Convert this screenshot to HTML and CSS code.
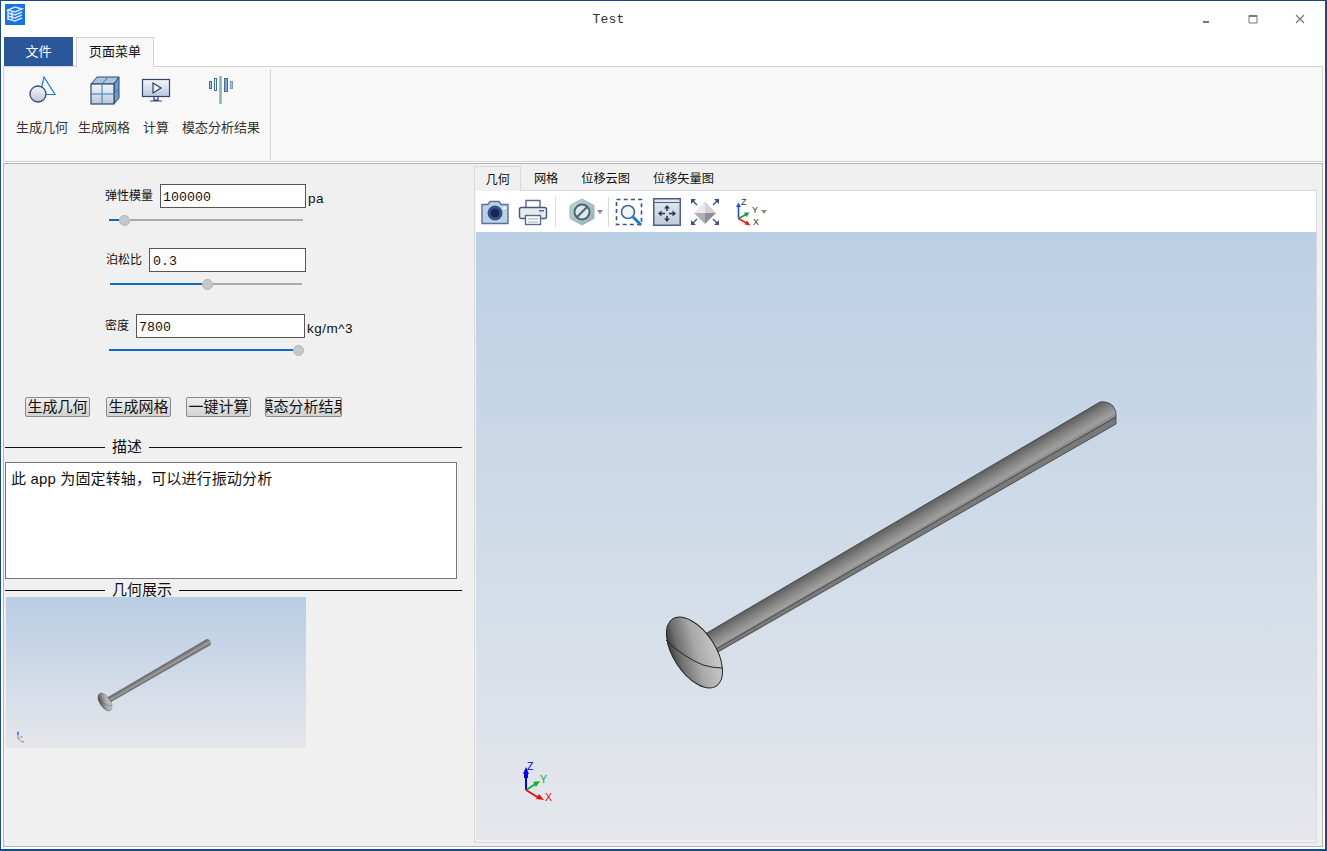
FILE: index.html
```html
<!DOCTYPE html>
<html>
	<head>
		<meta charset="UTF-8">
		<title>Test</title>
		<link rel="stylesheet" href="styles.css">
	</head>
	<body>
		<svg class="defs" width="0" height="0">
			<defs>
				<linearGradient id="shaftFill" gradientUnits="userSpaceOnUse" x1="900" y1="519.5" x2="909.8" y2="536.2">
					<stop offset="0" stop-color="#5e5e5e"/>
					<stop offset="0.4" stop-color="#808080"/>
					<stop offset="0.85" stop-color="#a0a0a0"/>
					<stop offset="1" stop-color="#8a8a8a"/>
				</linearGradient>
				<linearGradient id="headFill" x1="0.8" y1="0.1" x2="0.25" y2="0.95">
					<stop offset="0" stop-color="#c9c9c9"/>
					<stop offset="0.45" stop-color="#a8a8a8"/>
					<stop offset="0.8" stop-color="#707070"/>
					<stop offset="1" stop-color="#3c3c3c"/>
				</linearGradient>
				<linearGradient id="paleBlue" x1="0" y1="0" x2="0" y2="1">
					<stop offset="0" stop-color="#f4f6fa"/>
					<stop offset="1" stop-color="#b9c6dc"/>
				</linearGradient>
				<linearGradient id="fitFill" x1="0" y1="0" x2="0" y2="1">
					<stop offset="0" stop-color="#e4e8ee"/>
					<stop offset="1" stop-color="#c3cad6"/>
				</linearGradient>
				<linearGradient id="hexFill" x1="0" y1="0" x2="1" y2="1">
					<stop offset="0" stop-color="#c3d6d8"/>
					<stop offset="1" stop-color="#92b0b5"/>
				</linearGradient>
				<g id="model">
					<polygon points="718,652 1116,424 1116,417 707,645" fill="#7a7a7a" stroke="#3c3c3c" stroke-width="0.8"/>
					<path d="M705,634 L1100,402 Q1108,401 1113,406 Q1117,411 1116,417 L716,649 Z" fill="url(#shaftFill)" stroke="#3a3a3a" stroke-width="0.8"/>
					<ellipse cx="694.5" cy="652.5" rx="40" ry="21" transform="rotate(57 694.5 652.5)" fill="url(#headFill)" stroke="#222" stroke-width="1"/>
					<path d="M666,640 Q683,657 703,665 Q713,668 722,668" fill="none" stroke="#222" stroke-width="1"/>
				</g>
				<g id="triad">
					<line x1="526" y1="790" x2="526" y2="771" stroke="#0000e0" stroke-width="2"/>
					<polygon points="526,767 523,774 529,774" fill="#0000e0"/>
					<rect x="524" y="774" width="4" height="4" fill="#0000e0"/>
					<line x1="526" y1="790" x2="537" y2="783" stroke="#10b030" stroke-width="2"/>
					<polygon points="540,781 533,782 536,787" fill="#10b030"/>
					<line x1="526" y1="790" x2="539" y2="798" stroke="#e01010" stroke-width="2"/>
					<polygon points="544,800 536,799 539,794" fill="#e01010"/>
				</g>
			</defs>
		</svg>

		<div class="window">
			<header class="titlebar">
				<svg class="appicon" width="20" height="21" viewBox="0 0 20 21">
					<rect width="20" height="21" fill="#1673e6"/>
					<path d="M3 6 L10 3 L17 5 L10 8 Z M3 9 L10 11 L17 8 M3 12 L10 14 L17 11 M3 15 L10 17 L17 14" fill="none" stroke="#cfe3fb" stroke-width="1.6"/>
					<path d="M3 6 V16 M7 8 V15" stroke="#e6f0fd" stroke-width="1.4"/>
				</svg>
				<span class="title">Test</span>
				<div class="wincontrols">
					<svg width="12" height="12" viewBox="0 0 12 12"><rect x="3" y="8" width="6" height="2" fill="#777"/></svg>
					<svg width="12" height="12" viewBox="0 0 12 12"><path d="M2 2.5H10V10H2Z M2 3.5H10" fill="none" stroke="#777"/></svg>
					<svg width="12" height="12" viewBox="0 0 12 12"><path d="M2 2L10 10M10 2L2 10" fill="none" stroke="#777" stroke-width="1.2"/></svg>
				</div>
			</header>

			<nav class="menutabs">
				<a class="filetab">文件</a>
				<a class="pagetab">页面菜单</a>
			</nav>

			<section class="ribbon">
				<div class="rgroup">
					<div class="rbtn">
						<svg width="32" height="32" viewBox="0 0 32 32">
							<path d="M18 3 L29 20.5 H14 Z" fill="#f4f8fc" stroke="#1b7fc4" stroke-width="1.2"/>
							<circle cx="12" cy="20" r="8" fill="url(#paleBlue)" stroke="#34466e" stroke-width="1.3"/>
						</svg>
						<span>生成几何</span>
					</div>
					<div class="rbtn">
						<svg width="32" height="32" viewBox="0 0 32 32">
							<path d="M3 10 L9 3 H31 L26 10 Z" fill="#a9c6de" stroke="#34466e"/>
							<path d="M26 10 L31 3 V24 L26 30 Z" fill="#6e9cc0" stroke="#34466e"/>
							<rect x="3" y="10" width="23" height="20" fill="url(#paleBlue)" stroke="#34466e" stroke-width="1.2"/>
							<path d="M14 10 V30 M3 20 H26 M14 10 L20 3 M26 20 L31 14" stroke="#2d7fb8" fill="none"/>
						</svg>
						<span>生成网格</span>
					</div>
					<div class="rbtn">
						<svg width="30" height="32" viewBox="0 0 30 32">
							<rect x="1.5" y="5.5" width="27" height="17" fill="url(#paleBlue)" stroke="#34466e" stroke-width="1.2"/>
							<path d="M12 9 L20 14 L12 19 Z" fill="#eef2f8" stroke="#2b3e6a" stroke-width="1.2"/>
							<path d="M13 23 V26 H17 V23 M9 27 H21" fill="none" stroke="#34466e" stroke-width="1.2"/>
						</svg>
						<span>计算</span>
					</div>
					<div class="rbtn">
						<svg width="28" height="32" viewBox="0 0 28 32">
							<rect x="2.5" y="7.5" width="2" height="7" fill="#a8c4de" stroke="#3f6d9c"/>
							<rect x="7.5" y="4.5" width="2" height="12" fill="#f0f4f8" stroke="#3f6d9c"/>
							<rect x="12.5" y="2.5" width="2" height="27" fill="#8fb0b8" stroke="#a5bcc2"/>
							<rect x="17.5" y="4.5" width="3" height="13" fill="#8fa8c0" stroke="#3f6d9c"/>
							<rect x="23.5" y="7.5" width="2" height="7" fill="#a8c4de" stroke="#7a9cc0"/>
						</svg>
						<span>模态分析结果</span>
					</div>
				</div>
			</section>

			<main class="main">
				<section class="left">
					<div class="field field-e">
						<label>弹性模量</label>
						<input class="numbox box-e" type="text" value="100000">
						<span class="unit">pa</span>
					</div>
					<div class="slider slider-e">
						<i class="fill" style="width:10px"></i><b class="thumb"></b><i class="rest"></i>
					</div>

					<div class="field field-nu">
						<label>泊松比</label>
						<input class="numbox box-nu" type="text" value="0.3">
					</div>
					<div class="slider slider-nu">
						<i class="fill" style="width:92px"></i><b class="thumb"></b><i class="rest"></i>
					</div>

					<div class="field field-rho">
						<label>密度</label>
						<input class="numbox box-rho" type="text" value="7800">
						<span class="unit">kg/m^3</span>
					</div>
					<div class="slider slider-rho">
						<i class="fill" style="width:184px"></i><b class="thumb"></b>
					</div>

					<div class="actions">
						<button class="btn">生成几何</button>
						<button class="btn">生成网格</button>
						<button class="btn">一键计算</button>
						<button class="btn btn-wide">模态分析结果</button>
					</div>

					<div class="divider divider-desc"><span>描述</span></div>
					<div class="desc">此 app 为固定转轴，可以进行振动分析</div>
					<div class="divider divider-geo"><span>几何展示</span></div>

					<div class="thumbview">
						<svg width="300" height="151" viewBox="0 0 300 151">
							<use href="#model" transform="translate(99 105) scale(.25) translate(-694.5 -652.5)"/>
							<use href="#triad" transform="translate(12 142) scale(.35) translate(-526 -790)" opacity=".6"/>
						</svg>
					</div>
				</section>

				<section class="right">
					<nav class="viewtabs">
						<a class="vtab active">几何</a>
						<a class="vtab">网格</a>
						<a class="vtab">位移云图</a>
						<a class="vtab">位移矢量图</a>
					</nav>
					<div class="pane">
						<div class="toolbar">
							<!-- camera -->
							<svg class="ti ti-first" width="30" height="28" viewBox="0 0 30 28">
								<path d="M2 6.5 H8 L10 3.5 H19 L21 6.5 H28 V25.5 H2 Z" fill="#bcd0e8" stroke="#5a7299" stroke-width="1.4"/>
								<circle cx="15" cy="15" r="7.5" fill="#3a5288"/>
								<circle cx="15" cy="15" r="4.5" fill="#14285a"/>
								<rect x="23" y="9" width="3" height="2" fill="#fff"/>
							</svg>
							<!-- printer -->
							<svg class="ti ti-print" width="30" height="28" viewBox="0 0 30 28">
								<path d="M8 10 V2.5 H22 V10" fill="#fff" stroke="#5a6a85" stroke-width="1.4"/>
								<rect x="1.5" y="9.5" width="27" height="11" rx="2" fill="#e6ebf2" stroke="#46587a" stroke-width="1.4"/>
								<rect x="7.5" y="17.5" width="15" height="9" fill="#fff" stroke="#5a6a85" stroke-width="1.4"/>
								<path d="M10 21 H20 M10 24 H20" stroke="#9aa6b8"/>
								<rect x="21" y="12" width="5" height="1.5" fill="#5a6a85"/>
							</svg>
							<i class="tsep tsep-a"></i>
							<!-- section -->
							<svg class="ti ti-hex" width="26" height="28" viewBox="0 0 26 28">
								<polygon points="13,1 25,7.5 25,20.5 13,27 1,20.5 1,7.5" fill="url(#hexFill)" stroke="#9db8bc"/>
								<circle cx="13" cy="14" r="7.5" fill="#dfe8ea" stroke="#4a6672" stroke-width="2"/>
								<path d="M8 19 L18 9" stroke="#4a6672" stroke-width="2"/>
							</svg>
							<svg class="ti ti-arrow" width="6" height="4" viewBox="0 0 6 4"><polygon points="0,0 6,0 3,4" fill="#8a8a8a"/></svg>
							<i class="tsep tsep-b"></i>
							<!-- zoom box -->
							<svg class="ti ti-zoom" width="28" height="28" viewBox="0 0 28 28">
								<rect x="1.5" y="1.5" width="25" height="25" fill="none" stroke="#3a5288" stroke-width="1.6" stroke-dasharray="4 3.2"/>
								<circle cx="13" cy="14" r="6.5" fill="#eef4fb" stroke="#46688f" stroke-width="1.6"/>
								<path d="M18 19 L26 27" stroke="#1a7fc8" stroke-width="3"/>
							</svg>
							<!-- fit -->
							<svg class="ti ti-fit" width="28" height="28" viewBox="0 0 28 28">
								<rect x="0.75" y="0.75" width="26.5" height="26.5" fill="url(#fitFill)" stroke="#4a5f82" stroke-width="1.5"/>
								<rect x="1.5" y="4" width="25" height="1" fill="#4a5f82"/>
								<path d="M14 9 V13 M14 18 V22 M8 15.5 H12 M16 15.5 H20" stroke="#25385f" stroke-width="1.6"/>
								<path d="M14 7 L11 10.5 H17 Z M14 24 L11 20.5 H17 Z M5 15.5 L8.5 12.5 V18.5 Z M23 15.5 L19.5 12.5 V18.5 Z" fill="#25385f"/>
							</svg>
							<!-- iso -->
							<svg class="ti ti-iso" width="30" height="28" viewBox="0 0 30 28">
								<polygon points="15,3.5 4,15 15,15" fill="#eaeaec"/>
								<polygon points="15,3.5 26,15 15,15" fill="#d2d2d6"/>
								<polygon points="4,15 15,26 15,15" fill="#b0b0b4"/>
								<polygon points="26,15 15,26 15,15" fill="#909094"/>
								<path d="M1 1 H6 L1 6 Z M29 1 H24 L29 6 Z M1 27 H6 L1 22 Z M29 27 H24 L29 22 Z" fill="#37537e"/>
								<path d="M2 2 L7 7 M28 2 L23 7 M2 26 L7 21 M28 26 L23 21" stroke="#37537e" stroke-width="1.4"/>
							</svg>
							<!-- axes -->
							<svg class="ti ti-axes" width="25" height="28" viewBox="0 0 25 28" font-family="Liberation Sans, sans-serif" font-size="9">
								<path d="M2.5 20.5 V7" stroke="#1f55c0" stroke-width="1.6"/>
								<polygon points="2.5,4.5 0,9 5,9" fill="#1f55c0"/>
								<path d="M2.5 20.5 L11 16" stroke="#1e9a40" stroke-width="1.6"/>
								<polygon points="13.5,14.5 8,14.5 10.5,19" fill="#1e9a40"/>
								<path d="M2.5 20.5 L12 26" stroke="#e02020" stroke-width="1.6"/>
								<polygon points="14.5,27.5 8.5,26.5 11,22.5" fill="#e02020"/>
								<text x="5" y="7" fill="#333">Z</text>
								<text x="16" y="15" fill="#333">Y</text>
								<text x="17" y="27" fill="#333">X</text>
							</svg>
							<svg class="ti ti-arrow ti-arrow-last" width="6" height="4" viewBox="0 0 6 4"><polygon points="0,0 6,0 3,4" fill="#8a8a8a"/></svg>
						</div>
						<div class="viewer">
							<svg width="840" height="608" viewBox="476 232 840 608" font-family="Liberation Sans, sans-serif" font-size="10.5">
								<use href="#model"/>
								<use href="#triad"/>
								<text x="527" y="770" fill="#0000e0">Z</text>
								<text x="540" y="783" fill="#10b030">Y</text>
								<text x="545" y="801" fill="#e01010">X</text>
							</svg>
						</div>
					</div>
				</section>
			</main>
		</div>
	</body>
</html>
```

FILE: styles.css
```css
*{
	margin:0;padding:0;
	box-sizing:border-box;
}
body{
	width:1327px;
	height:851px;
	overflow:hidden;
	font-family:"Liberation Sans","Noto Sans CJK SC",sans-serif;
	color:#111;
}
.defs{
	display:block;
	height:0;
}
.window{
	width:1327px;
	height:851px;
	background:#fff;
	border:solid #1c4a80;
	border-width:1px 2px 2px 1px;
	display:flex;
	flex-direction:column;
}

/*标题栏*/
.titlebar{
	height:36px;
	flex:none;
	display:flex;
	align-items:flex-start;
}
.appicon{
	margin:3px 0 0 4px;
}
.title{
	flex:1;
	text-align:center;
	font:13px/37px "Liberation Mono",monospace;
	color:#333;
	padding-right:8px;
	letter-spacing:.2px;
}
.wincontrols{
	display:flex;
	gap:35px;
	margin:12px 19px 0 0;
}

/*菜单*/
.menutabs{
	height:29px;
	flex:none;
	display:flex;
	align-items:flex-end;
	padding-left:3px;
	gap:3px;
	font-size:13px;
}
.filetab{
	width:69px;
	height:29px;
	background:#2b579a;
	color:#fff;
	text-align:center;
	line-height:29px;
}
.pagetab{
	width:78px;
	height:30px;
	margin-bottom:-1px;
	background:#f8f8f8;
	border:1px solid #d2d2d2;
	border-bottom:none;
	text-align:center;
	line-height:28px;
	position:relative;
}
.ribbon{
	height:96px;
	flex:none;
	margin:0 2px 0 2px;
	background:#f8f8f8;
	border:1px solid #d2d2d2;
	padding:2px 0 1px;
}
.rgroup{
	width:267px;
	height:100%;
	border-right:1px solid #d5d5d5;
	display:flex;
	padding-left:12px;
	gap:10px;
}
.rbtn{
	display:flex;
	flex-direction:column;
	align-items:center;
	font-size:13px;
	color:#333;
	padding-top:5px;
}
.rbtn svg{
	height:32px;
}
.rbtn span{
	margin-top:12px;
	white-space:nowrap;
	line-height:20px;
}
.rbtn:nth-child(3){
	margin:0 1px;
}

/*主体*/
.main{
	flex:1;
	display:flex;
	margin:1px 2px 2px 2px;
	background:#f0f0f0;
	border:1px solid #b4b4b4;
	min-height:0;
}
.left{
	width:470px;
	flex:none;
	font-size:12px;
}
.field{
	display:flex;
	align-items:center;
}
.field label{
	white-space:nowrap;
	line-height:18px;
}
.numbox{
	height:24px;
	border:1px solid #555;
	background:#fff;
	font:13.3px "Liberation Mono",monospace;
	color:#111;
	padding:2px 0 0 2px;
	outline:none;
}
.unit{
	align-self:flex-end;
	margin-left:2px;
	font-size:13.5px;
	letter-spacing:.5px;
	line-height:18px;
}
.field-e{margin:20px 0 0 101px;}
.box-e{width:146px;margin-left:7px;}
.field-nu{margin:22px 0 0 102px;}
.box-nu{width:157px;margin-left:7px;padding-left:3px;}
.field-rho{margin:24px 0 0 101px;}
.box-rho{width:169px;margin-left:7px;}

.slider{
	height:12px;
	margin-top:6px;
	display:flex;
	align-items:center;
}
.slider .fill{
	height:2px;
	background:#0f6cbd;
}
.slider .rest{
	flex:1;
	height:2px;
	background:#aaa;
}
.thumb{
	width:11px;
	height:11px;
	flex:none;
	border-radius:50%;
	background:#c8c8c8;
	border:1px solid #b4b4b4;
}
.slider-e{margin-left:105px;width:194px;}
.slider-nu{margin-left:106px;width:192px;}
.slider-rho{margin-left:105px;width:195px;}

.actions{
	display:flex;
	margin:41px 0 0 21px;
	gap:16px;
}
.btn{
	width:65px;
	height:20px;
	flex:none;
	border:1px solid #8a8a8a;
	border-radius:2px;
	background:linear-gradient(#efefef,#d2d2d2);
	font:15px/18px "Liberation Sans","Noto Sans CJK SC",sans-serif;
	color:#111;
	display:flex;
	justify-content:center;
	overflow:hidden;
	white-space:nowrap;
}
.btn:nth-child(2){margin-right:-1px;}
.btn:nth-child(3){margin-right:-2px;}
.btn-wide{width:77px;}

.divider{
	width:457px;
	height:14px;
	margin-left:1px;
	display:flex;
	align-items:center;
	font-size:15px;
	line-height:14px;
}
.divider:before,
.divider:after{
	content:"";
	height:1px;
	background:#111;
}
.divider:before{
	width:100px;
	flex:none;
}
.divider:after{
	flex:1;
}
.divider span{
	padding:0 7px;
	white-space:nowrap;
}
.divider-desc{margin-top:23px;}
.divider-geo{margin-top:4px;}
.desc{
	width:452px;
	height:117px;
	margin:8px 0 0 1px;
	background:#fff;
	border:1px solid #777;
	padding:6px 5px;
	font-size:15px;
	letter-spacing:.15px;
	line-height:20px;
}
.thumbview{
	width:300px;
	height:151px;
	margin-left:2px;
	background:linear-gradient(#b9cde4,#e5e7eb);
}

/*右侧*/
.right{
	flex:1;
	display:flex;
	flex-direction:column;
	min-width:0;
	padding:2px 5px 3px 0;
}
.viewtabs{
	height:24px;
	flex:none;
	display:flex;
	font-size:12.2px;
}
.vtab{
	padding:0 11.5px;
	line-height:27px;
	color:#111;
}
.vtab.active{
	height:25px;
	padding:0 10.5px;
	margin-right:1px;
	line-height:26px;
	background:#f0f0f0;
	border:1px solid #d9d9d9;
	border-bottom:none;
	position:relative;
	z-index:1;
}
.pane{
	flex:1;
	border:1px solid #d9d9d9;
	padding:0 0 2px 1px;
	display:flex;
	flex-direction:column;
	min-height:0;
}
.toolbar{
	height:41px;
	flex:none;
	background:#fff;
	display:flex;
	align-items:center;
}
.ti{
	flex:none;
	display:block;
}
.ti-first{margin-left:4px;}
.ti-print{margin-left:8px;}
.tsep{
	width:1px;
	height:30px;
	flex:none;
	background:#d8d8d8;
}
.tsep-a{margin-left:7px;}
.ti-hex{margin-left:13px;}
.ti-arrow{margin-left:2px;}
.tsep-b{margin-left:5px;}
.ti-zoom{margin-left:6px;}
.ti-fit{margin-left:10px;}
.ti-iso{margin-left:9px;}
.ti-axes{margin-left:16px;}
.ti-arrow-last{margin-left:0;}
.viewer{
	flex:1;
	background:linear-gradient(#bbcfe5,#e5e7eb);
	min-height:0;
	overflow:hidden;
}
.viewer svg{
	display:block;
}
```
